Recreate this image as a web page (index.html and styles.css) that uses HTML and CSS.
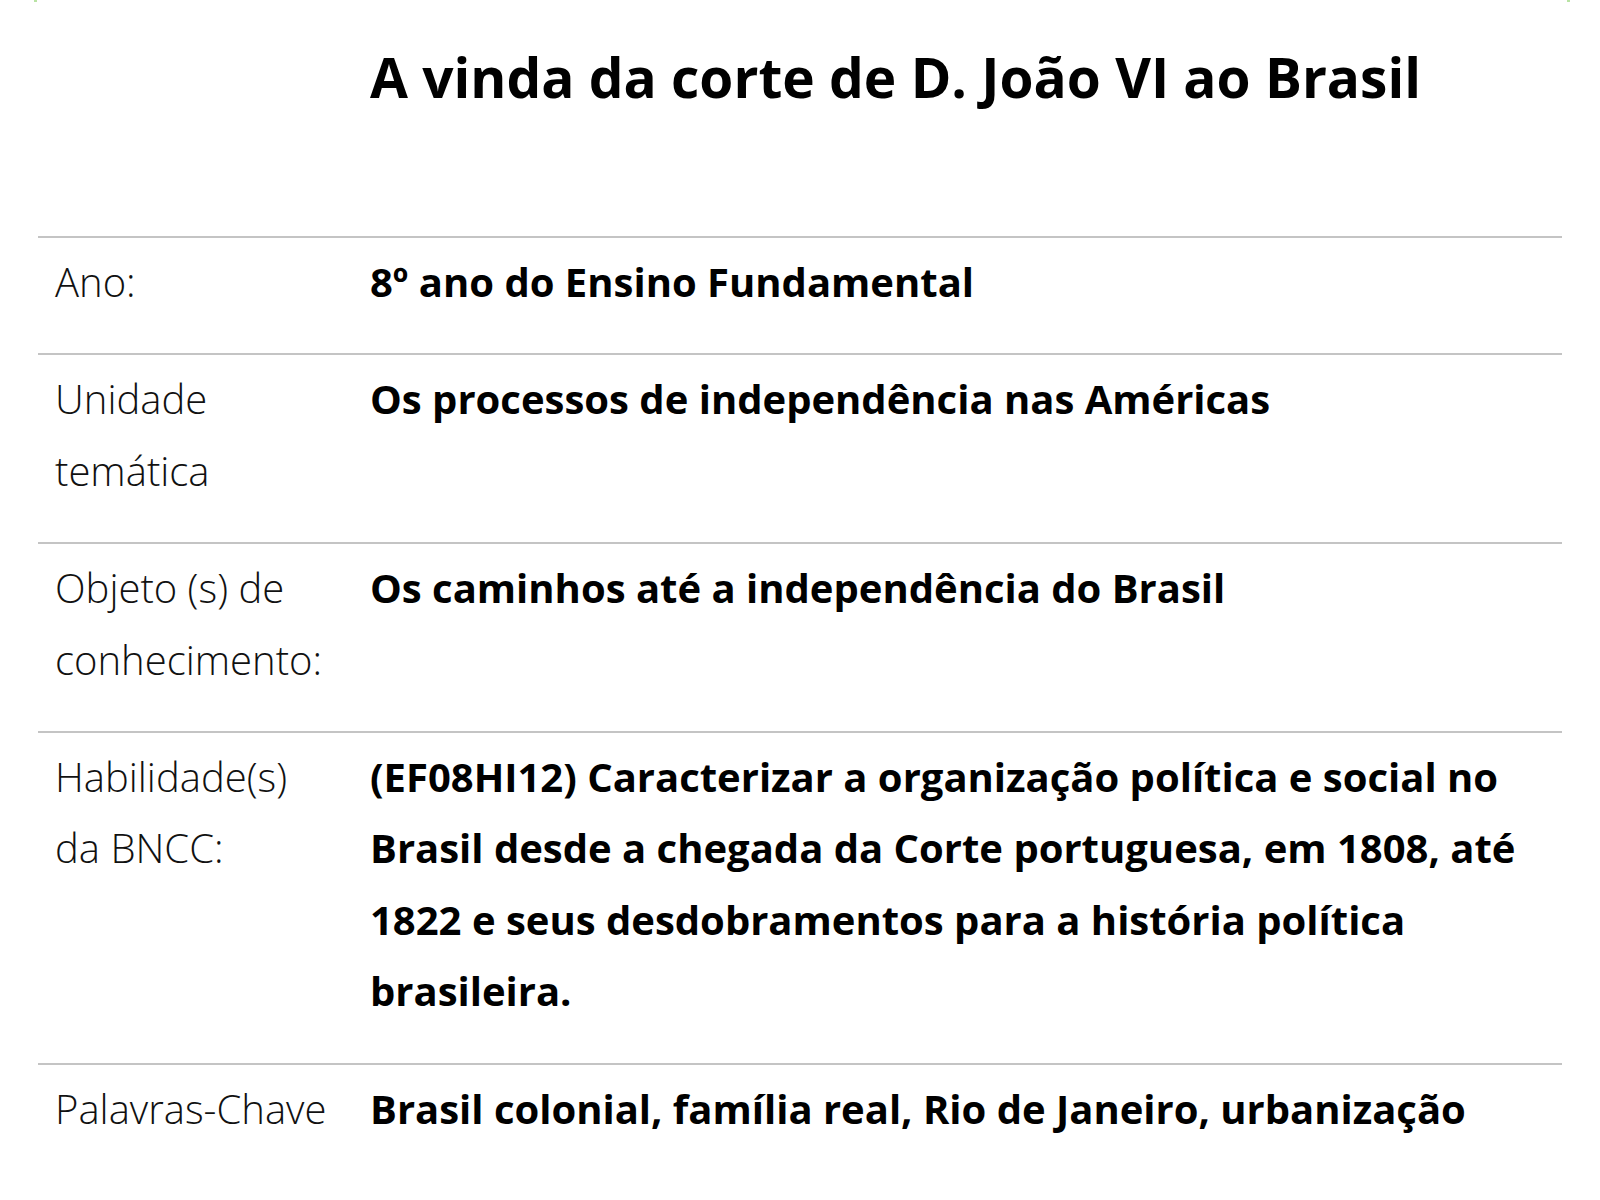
FILE: index.html
```html
<!DOCTYPE html>
<html lang="pt-BR">
<head>
<meta charset="utf-8">
<title>A vinda da corte de D. João VI ao Brasil</title>
<link rel="stylesheet" href="styles.css">
</head>
<body>
<div class="page">
  <div class="marks"><span class="mark"></span><span class="mark"></span></div>
  <h1 class="title">A vinda da corte de D. João VI ao Brasil</h1>
  <table class="info">
    <tr>
      <td class="label">Ano:</td>
      <td class="value">8º ano do Ensino Fundamental</td>
    </tr>
    <tr>
      <td class="label">Unidade temática</td>
      <td class="value">Os processos de independência nas Américas</td>
    </tr>
    <tr>
      <td class="label">Objeto (s) de conhecimento:</td>
      <td class="value">Os caminhos até a independência do Brasil</td>
    </tr>
    <tr>
      <td class="label">Habilidade(s) da BNCC:</td>
      <td class="value">(EF08HI12) Caracterizar a organização política e social no Brasil desde a chegada da Corte portuguesa, em 1808, até 1822 e seus desdobramentos para a história política brasileira.</td>
    </tr>
    <tr>
      <td class="label">Palavras-Chave</td>
      <td class="value">Brasil colonial, família real, Rio de Janeiro, urbanização</td>
    </tr>
  </table>
</div>
</body>
</html>
```

FILE: styles.css
```css
html, body {
  margin: 0;
  padding: 0;
  background: #ffffff;
}

body {
  font-family: "Open Sans", "Noto Sans", sans-serif;
  color: #000000;
}

.page {
  width: 1600px;
  height: 1200px;
  overflow: hidden;
}

.marks {
  display: flex;
  justify-content: space-between;
  width: 1536px;
  margin-left: 34px;
  height: 2px;
}

.mark {
  width: 3px;
  height: 2px;
  background: #b9e3a4;
}

.title {
  margin: 40px 0 0 370px;
  font-size: 55px;
  line-height: 70px;
  font-weight: 700;
  letter-spacing: 0;
}

.info {
  margin: 124px 0 0 38px;
  width: 1524px;
  border-collapse: collapse;
  table-layout: fixed;
}

.info tr {
  border-top: 2px solid #c4c4c4;
}

.info td {
  vertical-align: top;
  padding: 0;
}

.label {
  width: 278px;
  padding: 8px 20px 36px 17px !important;
  font-size: 40px;
  line-height: 71.4px;
  font-weight: 300;
  color: #111111;
}

.value {
  padding: 8px 20px 36px 17px !important;
  font-size: 40px;
  line-height: 71.4px;
  font-weight: 700;
}
```
